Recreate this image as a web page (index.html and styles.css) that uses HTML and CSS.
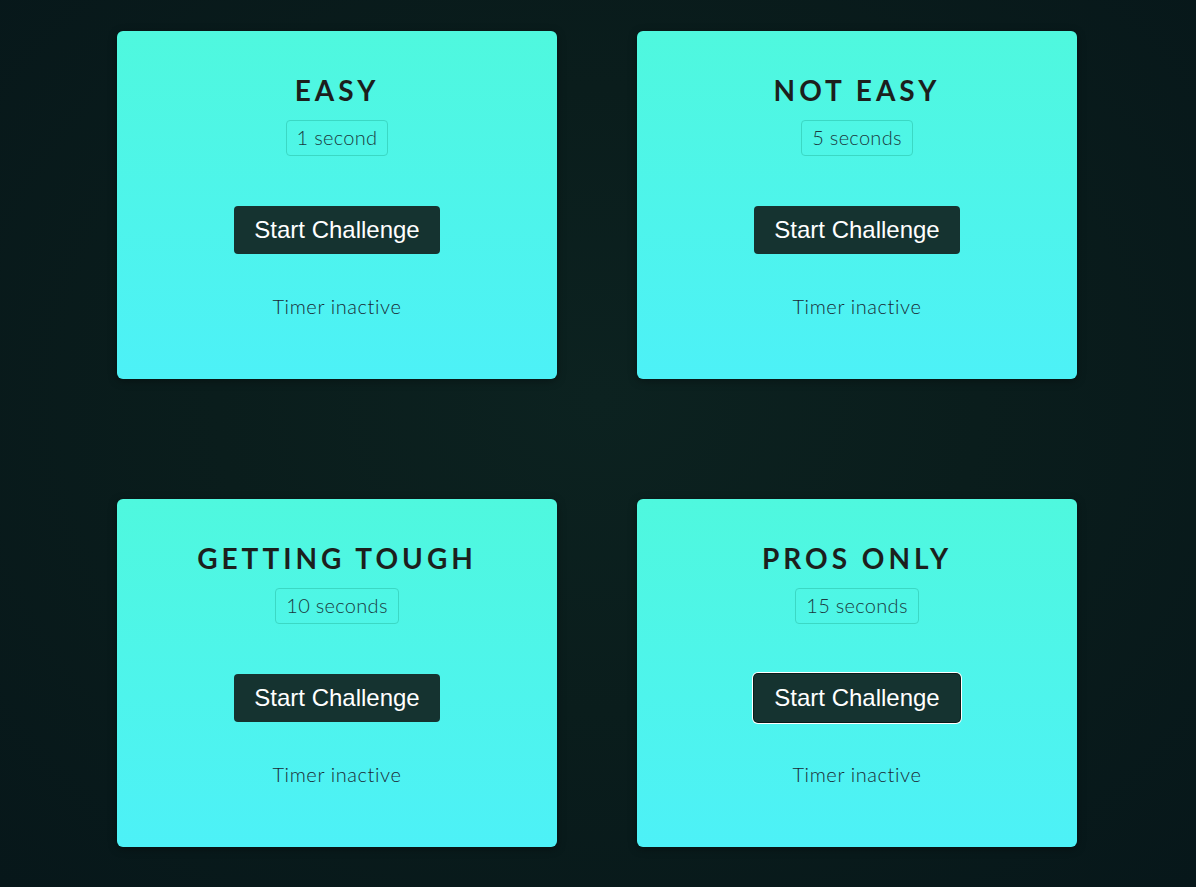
FILE: index.html
```html
<!DOCTYPE html>
<html lang="en">
<head>
<meta charset="utf-8">
<title>Timer Challenges</title>
<link rel="stylesheet" href="styles.css">
</head>
<body>
<main class="grid">
  <section class="card">
    <h2 class="title">Easy</h2>
    <p class="badge">1 second</p>
    <button class="btn">Start Challenge</button>
    <p class="status">Timer inactive</p>
  </section>
  <section class="card">
    <h2 class="title">Not Easy</h2>
    <p class="badge">5 seconds</p>
    <button class="btn">Start Challenge</button>
    <p class="status">Timer inactive</p>
  </section>
  <section class="card">
    <h2 class="title">Getting Tough</h2>
    <p class="badge">10 seconds</p>
    <button class="btn">Start Challenge</button>
    <p class="status">Timer inactive</p>
  </section>
  <section class="card">
    <h2 class="title">Pros Only</h2>
    <p class="badge">15 seconds</p>
    <button class="btn btn-focus">Start Challenge</button>
    <p class="status">Timer inactive</p>
  </section>
</main>
</body>
</html>
```

FILE: styles.css
```css
html, body {
  margin: 0;
  padding: 0;
  height: 100%;
}
body {
  background: radial-gradient(ellipse at 50% 45%, #0c2220 0%, #0a1d1c 45%, #07171a 100%);
  font-family: "Lato", "Noto Sans", sans-serif;
  overflow: hidden;
}
.grid {
  display: grid;
  grid-template-columns: 440px 440px;
  column-gap: 80px;
  row-gap: 120px;
  padding: 31px 0 0 117px;
}
.card {
  height: 348px;
  box-sizing: border-box;
  border-radius: 6px;
  background: linear-gradient(180deg, #4ff8de 0%, #4df1f7 100%);
  box-shadow: 0 2px 8px rgba(0, 0, 0, 0.35);
  display: flex;
  flex-direction: column;
  align-items: center;
  padding-top: 42px;
}
.title {
  margin: 0;
  font-size: 28px;
  line-height: 34px;
  font-weight: 700;
  letter-spacing: 4px;
  text-transform: uppercase;
  color: #1c1f1d;
}
.badge {
  margin: 13px 0 0;
  padding: 4px 10px 6px;
  font-size: 20px;
  line-height: 24px;
  font-weight: 300;
  letter-spacing: 0.3px;
  color: #1a3940;
  border: 1px solid #3bd8c4;
  border-radius: 4px;
}
.btn {
  margin-top: 50px;
  width: 206px;
  height: 48px;
  border: none;
  border-radius: 4px;
  background: #153330;
  color: #ffffff;
  font-family: "Liberation Sans", Arial, sans-serif;
  font-size: 24px;
  cursor: pointer;
}
.btn-focus {
  box-shadow: 0 0 0 1px #0d1a18, 0 0 0 2px #ffffff;
}
.status {
  margin: 40px 0 0;
  font-size: 20px;
  line-height: 24px;
  font-weight: 300;
  letter-spacing: 0.6px;
  color: #1a2a36;
}
```
